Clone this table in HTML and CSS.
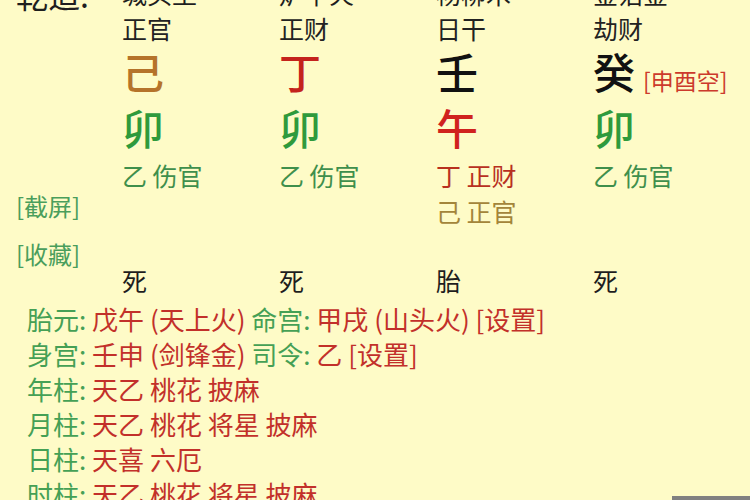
FILE: index.html
```html
<!DOCTYPE html>
<html lang="zh">
<head>
<meta charset="utf-8">
<link rel="stylesheet" href="styles.css">
</head>
<body>
<div class="page">
  <div class="chart">
    <div class="side">
      <div class="qz">乾造:</div>
      <div class="link first">[截屏]</div>
      <div class="link">[收藏]</div>
    </div>
    <div class="pillars">
      <div class="cell nayin">城头土</div>
      <div class="cell nayin">炉中火</div>
      <div class="cell nayin">杨柳木</div>
      <div class="cell nayin">金箔金</div>

      <div class="cell god">正官</div>
      <div class="cell god">正财</div>
      <div class="cell god">日干</div>
      <div class="cell god">劫财</div>

      <div class="cell big earth">己</div>
      <div class="cell big fire">丁</div>
      <div class="cell big water">壬</div>
      <div class="cell big water">癸<span class="kong">[申酉空]</span></div>

      <div class="cell big wood">卯</div>
      <div class="cell big wood">卯</div>
      <div class="cell big fire2">午</div>
      <div class="cell big wood">卯</div>

      <div class="cell hid wood-t">乙 伤官</div>
      <div class="cell hid wood-t">乙 伤官</div>
      <div class="cell hid fire-t">丁 正财</div>
      <div class="cell hid wood-t">乙 伤官</div>

      <div class="cell hid2"></div>
      <div class="cell hid2"></div>
      <div class="cell hid2 earth-t">己 正官</div>
      <div class="cell hid2"></div>

      <div class="cell spacer"></div>
      <div class="cell spacer"></div>
      <div class="cell spacer"></div>
      <div class="cell spacer"></div>

      <div class="cell stage">死</div>
      <div class="cell stage">死</div>
      <div class="cell stage">胎</div>
      <div class="cell stage">死</div>
    </div>
  </div>
  <div class="info">
    <div class="line"><span class="k">胎元:</span> <span class="v">戊午 (天上火)</span> <span class="k">命宫:</span> <span class="v">甲戌 (山头火) [设置]</span></div>
    <div class="line"><span class="k">身宫:</span> <span class="v">壬申 (剑锋金)</span> <span class="k">司令:</span> <span class="v">乙 [设置]</span></div>
    <div class="line"><span class="k">年柱:</span> <span class="v">天乙 桃花 披麻</span></div>
    <div class="line"><span class="k">月柱:</span> <span class="v">天乙 桃花 将星 披麻</span></div>
    <div class="line"><span class="k">日柱:</span> <span class="v">天喜 六厄</span></div>
    <div class="line"><span class="k">时柱:</span> <span class="v">天乙 桃花 将星 披麻</span></div>
  </div>
  <div class="corner"></div>
</div>
</body>
</html>
```

FILE: styles.css
```css
html, body {
  margin: 0;
  padding: 0;
}
body {
  background: #fefbc7;
  font-family: "Noto Sans CJK SC", "Noto Sans", sans-serif;
  color: #222;
}
.page {
  position: relative;
  width: 750px;
  height: 500px;
  overflow: hidden;
  background: #fefbc7;
}
.chart {
  display: flex;
  margin-top: -18px;
}
.side {
  width: 107px;
  padding-left: 16px;
  display: flex;
  flex-direction: column;
}
.qz {
  font-size: 32px;
  line-height: 28px;
  height: 28px;
  margin-top: -2px;
  color: #1e1e1e;
  white-space: nowrap;
}
.link {
  font-size: 24px;
  line-height: 30px;
  height: 30px;
  color: #4a9e5c;
  white-space: nowrap;
  margin-top: 18px;
}
.link.first {
  margin-top: 183px;
}
.pillars {
  display: grid;
  grid-template-columns: repeat(4, 157px);
  grid-template-rows: 28px 36px 56px 53px 40px 32px 39px 28px;
}
.cell {
  display: flex;
  align-items: center;
  white-space: nowrap;
  line-height: 1;
  font-size: 25px;
  box-sizing: border-box;
}
.nayin {
  color: #1e1e1e;
  padding-bottom: 6px;
}
.god { color: #222; }
.big {
  font-size: 42px;
  font-weight: 500;
  align-items: baseline;
  padding-top: 4px;
}
.earth { color: #b5732a; }
.fire { color: #c4221c; }
.fire2 { color: #d0221e; }
.water { color: #111; }
.wood { color: #2f9a3c; }
.kong {
  font-size: 23px;
  font-weight: 400;
  color: #cc3a2c;
  margin-left: 8px;
  position: relative;
  top: 1px;
}
.wood-t { color: #3f8f4c; }
.fire-t { color: #b8301f; }
.earth-t { color: #a3853a; }
.stage { color: #1e1e1e; }
.info {
  margin-top: 7px;
  padding-left: 27px;
}
.line {
  font-size: 26px;
  line-height: 35px;
  height: 35px;
  white-space: nowrap;
}
.k { color: #45a055; }
.v { color: #c2302a; }
.corner {
  position: absolute;
  right: 0;
  bottom: 0;
  width: 78px;
  height: 4px;
  background: #808080;
}
```
